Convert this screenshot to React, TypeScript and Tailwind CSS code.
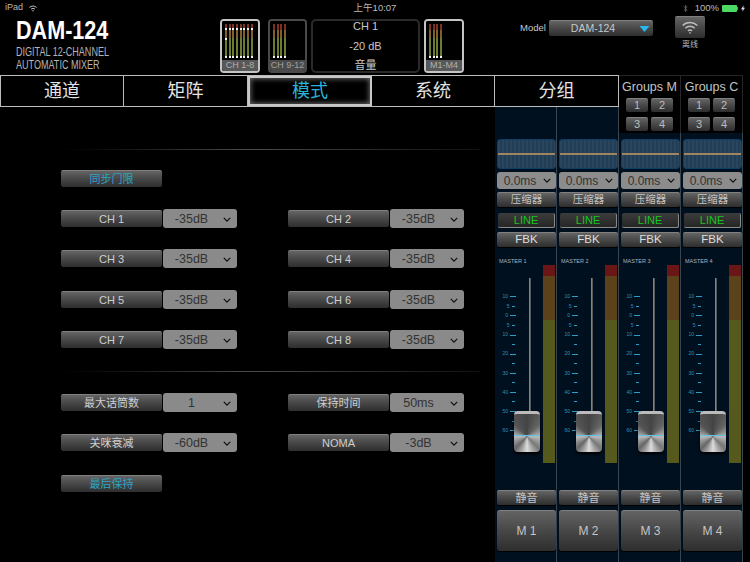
import React from "react";

const FONT = "[font-family:'Liberation_Sans','Noto_Sans_CJK_SC',sans-serif]";
const BTN = "bg-gradient-to-b from-[#646464] via-[#474747] to-[#2e2e2e] border-t border-[#808080] rounded-[2px] flex items-center justify-center shadow-[0_1px_1px_#000]";
const SEL = "bg-[#8a8a8a] rounded-[3px] flex items-center text-[#333] relative";
const RULE = "h-[1px] w-[465px] -ml-[46px] bg-gradient-to-r from-black via-[#4c4c4c] to-[#111]";

function Chevron({ className = "" }: { className?: string }) {
  return (
    <svg viewBox="0 0 10 6" className={"w-[8px] h-[5px] " + className}>
      <path d="M1 1l4 4 4-4" fill="none" stroke="#111" strokeWidth="1.6" />
    </svg>
  );
}

function LabelBtn({ text, blue }: { text: string; blue?: boolean }) {
  return (
    <div className={BTN + " w-[101px] h-[17px] text-[11px] " + (blue ? "text-[#2ba4c8]" : "text-[#cfcfcf]")}>{text}</div>
  );
}

function Sel({ text }: { text: string }) {
  return (
    <div className={SEL + " w-[74px] h-[19px] ml-[1px] -mt-[1px] pt-[1px] text-[12.5px]"}>
      <span className="w-[57px] text-center">{text}</span>
      <Chevron className="ml-[3px]" />
    </div>
  );
}

function Pair({ label, value }: { label: string; value: string }) {
  return (
    <div className="flex items-start">
      <LabelBtn text={label} />
      <Sel text={value} />
    </div>
  );
}

function Row({ a, b, h }: { a: [string, string]; b: [string, string]; h: string }) {
  return (
    <div className={"flex gap-[51px] " + h}>
      <Pair label={a[0]} value={a[1]} />
      <Pair label={b[0]} value={b[1]} />
    </div>
  );
}

function Thumb({ label, bars, active, dots, w = "w-[40px]" }: { label: string; bars: number; active?: boolean; dots?: boolean; w?: string }) {
  return (
    <div className={w + " h-[54px] rounded-[4px] border-2 flex flex-col overflow-hidden " + (active ? "border-[#c4c4c4]" : "border-[#4a4a4a]")}>
      <div className="flex-1 flex justify-start gap-[1.7px] pt-[3px] pb-[2px] pl-[3px] bg-black">
        {Array.from({ length: bars }).map((_, i) => (
          <div key={i} className="w-[2px] flex flex-col relative">
            <div className="h-[6px] bg-[#7a3022]" />
            <div className="h-[8px] bg-[#80602a]" />
            <div className="flex-1 bg-[#6c7c30]" />
            <div className="h-[2px] bg-[#f0f0f0]" />
            {dots && <div className="absolute left-0 top-[4px] w-[2px] h-[1.500px] bg-[#f0f0f0]" />}
            {dots && i === 0 && <div className="absolute left-0 top-[14px] w-[2px] h-[2px] bg-[#f0f0f0]" />}
          </div>
        ))}
      </div>
      <div className={"h-[11px] text-[9px] leading-[11px] text-center whitespace-nowrap " + (active ? "bg-[#585858] text-[#b0b0b0]" : "bg-[#4a4a4a] text-[#a0a0a0]")}>{label}</div>
    </div>
  );
}

function Tab({ text, w, active, first }: { text: string; w: string; active?: boolean; first?: boolean }) {
  return (
    <div
      className={
        w +
        " h-full flex items-center justify-center text-[18px] pt-[1px] " +
        (first ? "border-l border-[#bdbdbd] " : "") +
        (active
          ? "text-[#2bb3d9] border-2 border-[#c8c8c8] shadow-[inset_0_0_5px_1px_#666]"
          : "text-[#e4e4e4] border-r border-[#bdbdbd]")
      }
    >
      {text}
    </div>
  );
}

function GroupCol({ title }: { title: string }) {
  return (
    <div className="w-[62px] h-[58px] bg-black border-r border-t border-[#262626] flex flex-col items-center pt-[4px]">
      <div className="text-[12.5px] leading-[15px] text-[#c4c4c4] whitespace-nowrap">{title}</div>
      <div className="grid grid-cols-2 gap-x-[3px] gap-y-[5px] mt-[3px]">
        {["1", "2", "3", "4"].map((n) => (
          <div key={n} className={BTN + " w-[22px] h-[14px] text-[11px] text-[#bbb]"}>{n}</div>
        ))}
      </div>
    </div>
  );
}

const SCALE: [string, boolean][] = [
  ["10", true], ["5", false], ["0", true], ["5", false], ["10", true], ["", false], ["20", true], ["", false],
  ["30", true], ["", false], ["40", true], ["", false], ["50", true], ["", false], ["60", true],
];

function Strip({ n, top }: { n: number; top: string }) {
  return (
    <div className={"w-[62px] flex-1 bg-[#00101f] border-r border-[#3a4550] pl-[2px] pr-[1px] flex flex-col " + top}>
      <div className="w-[59px] h-[30px] rounded-[3px] border border-[#0b3f66] bg-[repeating-linear-gradient(90deg,#29465f_0_2px,#233d55_2px_4px)] flex items-center">
        <div className="w-full h-[2px] bg-[#a08560]" />
      </div>
      <div className={SEL + " w-[59px] h-[17px] mt-[3px] bg-[#8c8c8c] text-[12px]"}>
        <span className="w-[46px] text-center">0.0ms</span>
        <Chevron />
      </div>
      <div className={BTN + " w-[59px] h-[15px] mt-[3px] text-[10.5px] text-[#c4c4c4]"}>压缩器</div>
      <div className="w-[57px] h-[15px] mt-[6px] ml-[1px] bg-gradient-to-b from-[#3c3c3c] to-[#262626] border-b border-r border-[#8a8a8a] rounded-[2px] flex items-center justify-center text-[11px] text-[#19c41e]">LINE</div>
      <div className={BTN + " w-[59px] h-[15px] mt-[4px] text-[11.5px] text-[#ddd]"}>FBK</div>
      <div className="text-[5.5px] leading-[7px] text-[#a9b3bb] mt-[11px] ml-[2px] whitespace-nowrap">MASTER {n}</div>
      <div className="flex h-[198px] relative">
        <div className="w-[19px] pt-[27px] flex flex-col">
          {SCALE.map(([t, long], i) => (
            <div key={i} className="h-[9.57px] flex items-center justify-end">
              <span className="text-[5px] text-[#2b93bd] mr-[2px]">{t}</span>
              <div className={"h-[1px] bg-[#2a9fc9] " + (long ? "w-[6px]" : "w-[3px] mr-[1.5px]")} />
            </div>
          ))}
        </div>
        <div className="w-[27px] flex justify-center pt-[13px]">
          <div className="w-[2px] h-[134px] bg-gradient-to-r from-[#999] to-[#444]" />
        </div>
        <div className="w-[12px] h-full flex flex-col">
          <div className="h-[11px] bg-[#6a1616]" />
          <div className="h-[44px] bg-[#5c421a]" />
          <div className="flex-1 bg-[#555a1c]" />
        </div>
        <div className="absolute left-[17px] top-[146px] w-[26px] h-[41px] rounded-[4px] border-t-[3px] border-[#bbb] bg-[conic-gradient(from_180deg_at_50%_60%,#ddd,#666,#bbb,#555,#444,#666,#bbb,#777,#ddd)] shadow-[0_2px_3px_#000] flex items-center">
          <div className="w-full h-[1px] bg-[#5fc4e6] mt-[4px]" />
        </div>
      </div>
      <div className={BTN + " w-[59px] h-[15px] mt-[27px] text-[11px] text-[#c4c4c4]"}>静音</div>
      <div className={BTN + " w-[59px] h-[41px] mt-[5px] text-[12px] text-[#c4c4c4] rounded-[3px]"}>M {n}</div>
    </div>
  );
}

export default function App() {
  return (
    <div className={"w-[750px] h-[562px] bg-black overflow-hidden flex flex-col relative " + FONT}>
      {/* header */}
      <div className="h-[75px] flex flex-col relative">
        <div className="h-[16px] flex items-center justify-between pl-[5px] pr-[5px] text-[9px] text-[#bbb] relative">
          <div className="flex items-center gap-[6px]">
            <span>iPad</span>
            <svg viewBox="0 0 24 18" className="w-[8px] h-[7px]">
              <g fill="none" stroke="#bbb" strokeWidth="3">
                <path d="M1 6a16 16 0 0 1 22 0" />
                <path d="M6 11a9 9 0 0 1 12 0" />
              </g>
              <circle cx="12" cy="16" r="2.2" fill="#bbb" />
            </svg>
          </div>
          <div className="absolute left-0 right-0 text-center text-[9.5px]">上午10:07</div>
          <div className="flex items-center ml-auto relative">
            <svg viewBox="0 0 6 10" className="w-[5px] h-[9px] mr-[7px]">
              <path d="M1 2.500L5 7 3 9V1l2 2-4 4.500" fill="none" stroke="#777" strokeWidth="0.8" />
            </svg>
            <span className="text-[9.5px] mr-[3px]">100%</span>
            <div className="w-[15px] h-[7px] bg-[#4cd964] rounded-[1px]" />
            <div className="w-[1px] h-[3px] bg-[#888] mr-[3px]" />
            <svg viewBox="0 0 6 10" className="w-[4px] h-[7px]">
              <path d="M4 0L0 6h2.500L2 10l4-6H3.500z" fill="#ddd" />
            </svg>
          </div>
        </div>
        <div className="flex-1 flex">
          <div className="w-[220px] pl-[16px] pt-[4px] text-white">
            <div className="text-[26px] leading-[21px] font-bold origin-left scale-x-[0.83] whitespace-nowrap">DAM-124</div>
            <div className="text-[13.5px] leading-[13px] mt-[4px] text-[#b4b4b4] origin-left scale-x-[0.67] whitespace-nowrap">DIGITAL 12-CHANNEL</div>
            <div className="text-[13.5px] leading-[13px] text-[#b4b4b4] origin-left scale-x-[0.67] whitespace-nowrap">AUTOMATIC MIXER</div>
          </div>
          <div className="flex gap-[8px] pt-[3px] items-start">
            <Thumb label="CH 1-8" bars={8} active dots />
            <div className="flex gap-[4px]">
              <Thumb label="CH 9-12" bars={4} w="w-[39px]" />
              <div className="w-[109px] h-[54px] rounded-[5px] border-2 border-[#2a2a2a] flex flex-col items-center justify-between text-[11px] leading-[11px] text-[#c8c8c8]">
                <span>CH 1</span>
                <span>-20 dB</span>
                <span>音量</span>
              </div>
              <Thumb label="M1-M4" bars={4} active />
            </div>
          </div>
          <div className="pl-[56px] pt-[4px] flex items-start">
            <span className="text-[9.5px] leading-[15px] text-[#c8c8c8] w-[29px]">Model</span>
            <div className={BTN + " w-[104px] h-[16px] text-[10.5px] text-[#c8c8c8] relative"}>
              <span className="mr-[16px]">DAM-124</span>
              <svg viewBox="0 0 10 6" className="absolute right-[3px] top-[5px] w-[11px] h-[6px]">
                <path d="M0 0h10L5 6z" fill="#29b6e8" />
              </svg>
            </div>
          </div>
          <div className="ml-[22px] flex flex-col items-center">
            <div className={BTN + " w-[30px] h-[22px]"}>
              <svg viewBox="0 0 24 18" className="w-[16px] h-[13px]">
                <g fill="none" stroke="#bdbdbd" strokeWidth="2.2">
                  <path d="M1 6a16 16 0 0 1 22 0" />
                  <path d="M5 10a10 10 0 0 1 14 0" />
                  <path d="M9 14a4.500 4.500 0 0 1 6 0" />
                </g>
                <circle cx="12" cy="17" r="1.2" fill="#bdbdbd" />
              </svg>
            </div>
            <span className="text-[8px] leading-[11px] mt-[1px] text-[#bbb]">离线</span>
          </div>
        </div>
      </div>

      {/* body */}
      <div className="flex-1 flex min-h-0">
        <div className="w-[495px] flex flex-col">
          <div className="h-[32px] flex border-y border-[#bdbdbd]">
            <Tab w="w-[124px]" text="通道" first />
            <Tab w="w-[124px]" text="矩阵" />
            <Tab w="w-[124px]" text="模式" active />
            <Tab w="w-[123px]" text="系统" />
          </div>
          <div className="flex-1 flex flex-col pl-[61px] pt-[42px]">
            <div className={RULE} />
            <div className="mt-[20px] h-[40px]"><LabelBtn text="同步门限" blue /></div>
            <Row h="h-[40px]" a={["CH 1", "-35dB"]} b={["CH 2", "-35dB"]} />
            <Row h="h-[41px]" a={["CH 3", "-35dB"]} b={["CH 4", "-35dB"]} />
            <Row h="h-[40px]" a={["CH 5", "-35dB"]} b={["CH 6", "-35dB"]} />
            <Row h="h-[40px]" a={["CH 7", "-35dB"]} b={["CH 8", "-35dB"]} />
            <div className={RULE} />
            <div className="mt-[22px]" />
            <Row h="h-[40px]" a={["最大话筒数", "1"]} b={["保持时间", "50ms"]} />
            <Row h="h-[41px]" a={["关咪衰减", "-60dB"]} b={["NOMA", "-3dB"]} />
            <LabelBtn text="最后保持" blue />
          </div>
        </div>
        <div className="w-[124px] flex flex-col">
          <div className="h-[32px] flex items-center justify-center text-[18px] pt-[1px] text-[#e4e4e4] border border-l-0 border-[#bdbdbd]">分组</div>
          <div className="flex-1 flex min-h-0">
            <Strip n={1} top="pt-[32px]" />
            <Strip n={2} top="pt-[32px]" />
          </div>
        </div>
        <div className="w-[124px] flex flex-col">
          <div className="flex">
            <GroupCol title="Groups M" />
            <GroupCol title="Groups C" />
          </div>
          <div className="flex-1 flex min-h-0">
            <Strip n={3} top="pt-[6px]" />
            <Strip n={4} top="pt-[6px]" />
          </div>
        </div>
      </div>
    </div>
  );
}
